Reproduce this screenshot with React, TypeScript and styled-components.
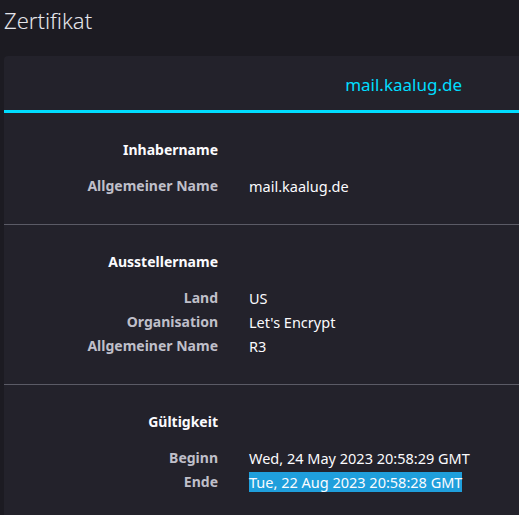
import React from "react";
import styled, { createGlobalStyle } from "styled-components";

const GlobalStyle = createGlobalStyle`
  html, body {
    margin: 0;
    padding: 0;
    background: #1c1b22;
    overflow: hidden;
  }

  body {
    font-family: "Noto Sans", "Open Sans", sans-serif;
    color: #fbfbfe;
  }
`;

const StyledPage = styled.main`
  display: flex;
  flex-direction: column;
  gap: 20px;
  padding: 4px 0 0 4px;
  min-height: 100vh;
  box-sizing: border-box;
`;

const StyledTitle = styled.h1`
  margin: 0;
  font-size: 22px;
  font-weight: 300;
  line-height: 32px;
  color: #e4e4ea;
`;

const StyledCard = styled.section`
  background: #23222b;
  border-radius: 4px 0 0 0;
`;

const StyledTabBar = styled.nav`
  display: flex;
  justify-content: flex-end;
  border-bottom: 3px solid #00ddff;
`;

const StyledTab = styled.span`
  padding: 15px 57px 11px 0;
  font-size: 17px;
  line-height: 28px;
  color: #00ddff;
`;

const StyledSection = styled.div`
  display: grid;
  grid-template-columns: 214px 1fr;
  column-gap: 31px;
  padding: 25px 0 26px;
  font-size: 14.5px;
  line-height: 24px;

  & + & {
    border-top: 1px solid #5b5b66;
  }
`;

const StyledHeading = styled.h2`
  grid-column: 1;
  margin: 0 0 12px;
  text-align: right;
  font-size: 14px;
  font-weight: 700;
  color: #fbfbfe;
`;

const StyledLabel = styled.span`
  grid-column: 1;
  text-align: right;
  font-size: 14px;
  font-weight: 700;
  color: #bfbfc9;
`;

const StyledValue = styled.span<{ $selected?: boolean }>`
  grid-column: 2;
  white-space: nowrap;

  & > span {
    background: ${({ $selected }) => ($selected ? "#1f9fdc" : "transparent")};
    color: #fbfbfe;
  }
`;

interface Field {
  label: string;
  value: string;
  selected?: boolean;
}

interface Group {
  title: string;
  fields: Field[];
}

const groups: Group[] = [
  {
    title: "Inhabername",
    fields: [{ label: "Allgemeiner Name", value: "mail.kaalug.de" }],
  },
  {
    title: "Ausstellername",
    fields: [
      { label: "Land", value: "US" },
      { label: "Organisation", value: "Let's Encrypt" },
      { label: "Allgemeiner Name", value: "R3" },
    ],
  },
  {
    title: "Gültigkeit",
    fields: [
      { label: "Beginn", value: "Wed, 24 May 2023 20:58:29 GMT" },
      { label: "Ende", value: "Tue, 22 Aug 2023 20:58:28 GMT", selected: true },
    ],
  },
];

const App: React.FC = () => {
  return (
    <>
      <GlobalStyle />
      <StyledPage>
        <StyledTitle>Zertifikat</StyledTitle>
        <StyledCard>
          <StyledTabBar>
            <StyledTab>mail.kaalug.de</StyledTab>
          </StyledTabBar>
          {groups.map((group) => (
            <StyledSection key={group.title}>
              <StyledHeading>{group.title}</StyledHeading>
              {group.fields.map((field) => (
                <React.Fragment key={field.label}>
                  <StyledLabel>{field.label}</StyledLabel>
                  <StyledValue $selected={field.selected}>
                    <span>{field.value}</span>
                  </StyledValue>
                </React.Fragment>
              ))}
            </StyledSection>
          ))}
        </StyledCard>
      </StyledPage>
    </>
  );
};

export default App;
